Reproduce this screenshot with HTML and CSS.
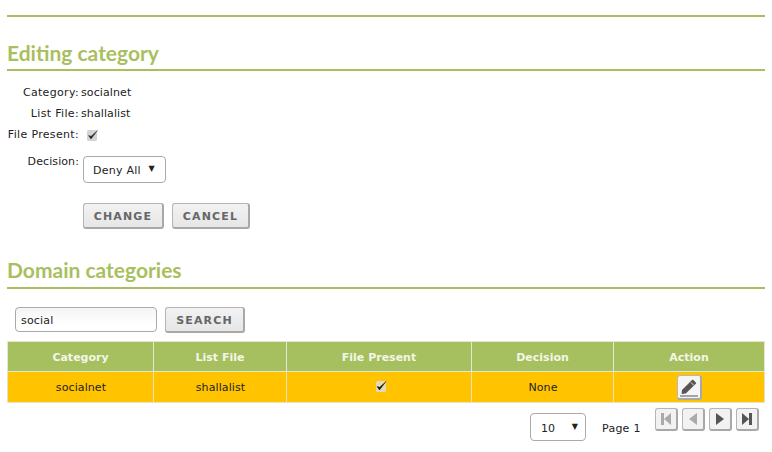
FILE: index.html
```html
<!DOCTYPE html>
<html lang="en">
<head>
<meta charset="utf-8">
<title>Editing category</title>
<link rel="stylesheet" href="styles.css">
</head>
<body>
<div class="page">
  <div class="top-rule"></div>
  <h2 class="heading first">Editing category</h2>
  <form class="edit-form">
    <div class="label l1">Category:</div><div class="value l1">socialnet</div>
    <div class="label l2">List File:</div><div class="value l2">shallalist</div>
    <div class="label l3">File Present:</div>
    <div class="value l3"><svg class="check" width="14" height="14" viewBox="0 0 14 14"><rect x="1" y="2" width="10" height="11" rx="1.5" fill="#d4d4d4"/><path d="M2.5 7.5 5 11 11.5 2.5 5.2 8.2z" fill="#222" stroke="#222" stroke-width=".4"/></svg></div>
    <div class="label l4">Decision:</div>
    <div class="value l4"><div class="select deny"><span>Deny All</span><span class="arrow">▼</span></div></div>
    <div class="actions"><button type="button" class="btn change">CHANGE</button><button type="button" class="btn cancel">CANCEL</button></div>
  </form>
  <h2 class="heading second">Domain categories</h2>
  <div class="search-row"><div class="input">social</div><button type="button" class="btn search">SEARCH</button></div>
  <table class="grid">
    <colgroup><col class="c1"><col class="c2"><col class="c3"><col class="c4"><col class="c5"></colgroup>
    <thead><tr><th>Category</th><th>List File</th><th>File Present</th><th>Decision</th><th>Action</th></tr></thead>
    <tbody><tr><td>socialnet</td><td>shallalist</td>
      <td><svg class="row-check" width="14" height="14" viewBox="0 0 14 14"><rect x="2" y="2" width="10" height="11" rx="1.5" fill="#e4d9b0"/><path d="M3 7.5 5.500 11 12 2.500 5.700 8.200z" fill="#111" stroke="#111" stroke-width=".4"/></svg></td>
      <td>None</td>
      <td class="action-cell"><div class="edit-btn"><svg width="20" height="20" viewBox="0 0 20 20"><path d="M3 13 13 3a1 1 0 0 1 1.400 0l2.400 2.400a1 1 0 0 1 0 1.400L6.800 16.400 2.600 17z" fill="#555"/><path d="M12 5.500 14.800 8.300" stroke="#f2f2f2" stroke-width=".9"/><path d="M1 19h18" stroke="#555" stroke-width="1"/></svg></div></td></tr></tbody>
  </table>
  <div class="pager">
    <div class="select size"><span>10</span><span class="arrow">▼</span></div>
    <span class="page-label">Page 1</span>
    <div class="nav-group">
      <div class="nav off"><svg width="14" height="14" viewBox="0 0 14 14"><path d="M2 1h3v12H2zM12 1v12L5 7z" fill="#aaa"/></svg></div>
      <div class="nav off"><svg width="14" height="14" viewBox="0 0 14 14"><path d="M11 1v12L3 7z" fill="#aaa"/></svg></div>
      <div class="nav"><svg width="14" height="14" viewBox="0 0 14 14"><path d="M3 1v12l8-6z" fill="#555"/></svg></div>
      <div class="nav"><svg width="14" height="14" viewBox="0 0 14 14"><path d="M2 1v12l7-6zM9 1h3v12H9z" fill="#555"/></svg></div>
    </div>
  </div>
</div>
</body>
</html>
```

FILE: styles.css
```css
* { box-sizing: border-box; }
html, body { margin: 0; padding: 0; background: #fff; }
body { font-family: "DejaVu Sans", sans-serif; font-size: 11px; color: #222; width: 772px; height: 452px; overflow: hidden; }
.page { padding: 15px 7px 0; }
.top-rule { height: 2px; background: #a6bf5f; }
.heading { margin: 0; font-family: "Lato", sans-serif; font-size: 21px; font-weight: 700; line-height: 23px; color: #a9bf5e; border-bottom: 2px solid #a6bf5f; height: 30px; }
.heading.first { margin-top: 24px; }
.heading.second { margin-top: 29px; height: 31px; }
.edit-form { display: grid; grid-template-columns: 72px 1fr; column-gap: 2px; margin-top: 15px; }
.label { text-align: right; line-height: 14px; white-space: nowrap; letter-spacing: .33px; }
.label.l4 { letter-spacing: .1px; }
.value { line-height: 14px; letter-spacing: .1px; }
.l1, .l2 { height: 21px; }
.l3 { height: 27px; }
.check { display: block; margin: 0 0 0 5px; }
.select { display: flex; align-items: center; justify-content: space-between; border: 1px solid #aaa; border-radius: 4px; background: #fff; height: 27px; color: #222; letter-spacing: .25px; }
.deny { width: 83px; margin: 1px 0 0 2px; padding: 3px 10px 0 9px; }
.arrow { font-size: 8px; position: relative; top: -2px; }
.actions { grid-column: 2; display: flex; gap: 8px; margin: 20px 0 0 2px; }
.btn { font-family: "DejaVu Sans", sans-serif; font-weight: bold; font-size: 11px; letter-spacing: 1.15px; color: #666; height: 26px; background: linear-gradient(#f2f2f2, #e6e6e6); border: 1px solid #b5b5b5; border-right: 2px solid #a8a8a8; border-bottom: 2px solid #a8a8a8; border-radius: 3px; padding: 1px 0 0; }
.change { width: 81px; }
.cancel { width: 78px; }
.search-row { display: flex; gap: 8px; margin: 18px 0 0 8px; }
.input { width: 142px; height: 25px; border: 1px solid #aaa; border-radius: 4px; background: linear-gradient(#f4f4f4, #fff 70%); font-size: 11px; line-height: 25px; padding-left: 5px; color: #222; letter-spacing: .2px; }
.search { width: 80px; }
.grid { width: 757px; border-collapse: collapse; table-layout: fixed; margin-top: 8px; }
.c1 { width: 146px; } .c2 { width: 133px; } .c3 { width: 185px; } .c4 { width: 142px; } .c5 { width: 151px; }
.grid th, .grid td { padding: 1px 0 0; text-align: center; font-size: 11px; border: 1px solid #dcdcc8; }
.grid th { height: 30px; background: #a6bf5f; color: #f4f6e8; font-weight: bold; border-color: #e4e8d0; }
.grid td { height: 31px; padding-left: 1px; background: #ffc300; color: #222; border-color: #e8e2c0; letter-spacing: .1px; }
.grid td.action-cell { padding-left: 0; }
.row-check { display: block; margin: -3px auto 0; position: relative; left: 1px; }
.edit-btn { width: 25px; height: 25px; margin: 0 auto; display: flex; align-items: center; justify-content: center; background: #f5f5f5; border: 1px solid #b8b8b8; border-bottom: 2px solid #a8a8a8; border-right: 2px solid #a8a8a8; border-radius: 3px; }
.pager { display: flex; align-items: flex-start; margin-top: 5px; padding-left: 523px; }
.size { width: 56px; height: 28px; padding: 2px 7px 0 10px; margin-top: 5px; letter-spacing: 0; }
.page-label { margin: 14px 0 0 16px; line-height: 14px; width: 53px; letter-spacing: .25px; }
.nav-group { display: flex; gap: 4px; }
.nav { width: 23px; height: 23px; display: flex; align-items: center; justify-content: center; background: #f2f2f2; border: 1px solid #b5b5b5; border-right: 2px solid #a8a8a8; border-bottom: 2px solid #a8a8a8; border-radius: 3px; }
```
